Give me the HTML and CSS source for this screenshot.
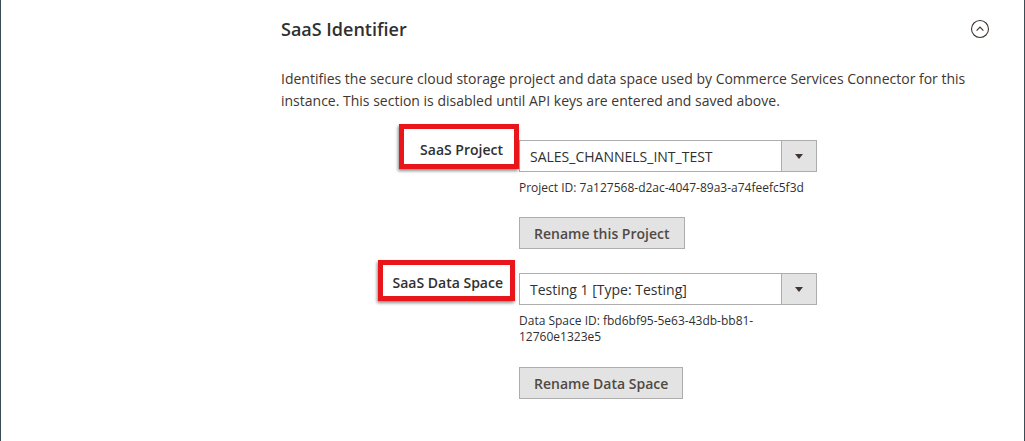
FILE: index.html
```html
<!DOCTYPE html>
<html>
<head>
<meta charset="utf-8">
<link rel="stylesheet" href="styles.css">
</head>
<body>
<div class="frame">
  <div class="section">
    <div class="section-head">
      <h2 class="title">SaaS Identifier</h2>
      <span class="toggle">
        <svg width="20" height="20" viewBox="0 0 20 20">
          <circle cx="10" cy="10" r="8.5" fill="none" stroke="#41362f" stroke-width="1.1"/>
          <path d="M6.6 11.6 L10 8.2 L13.4 11.6" fill="none" stroke="#41362f" stroke-width="1.2"/>
        </svg>
      </span>
    </div>
    <p class="desc">Identifies the secure cloud storage project and data space used by Commerce Services Connector for this instance. This section is disabled until API keys are entered and saved above.</p>

    <div class="field field-project">
      <div class="label"><span class="label-text mark mark-project">SaaS Project</span></div>
      <div class="control">
        <div class="select">
          <span class="select-value">SALES_CHANNELS_INT_TEST</span>
          <span class="select-arrow"></span>
        </div>
        <div class="note">Project ID: 7a127568-d2ac-4047-89a3-a74feefc5f3d</div>
        <button class="btn">Rename this Project</button>
      </div>
    </div>

    <div class="field field-space">
      <div class="label"><span class="label-text mark mark-space">SaaS Data Space</span></div>
      <div class="control">
        <div class="select">
          <span class="select-value">Testing 1 [Type: Testing]</span>
          <span class="select-arrow"></span>
        </div>
        <div class="note">Data Space ID: fbd6bf95-5e63-43db-bb81-12760e1323e5</div>
        <button class="btn">Rename Data Space</button>
      </div>
    </div>
  </div>
</div>
</body>
</html>
```

FILE: styles.css
```css
* { box-sizing: border-box; }
html, body { margin: 0; padding: 0; background: #fff; }
body {
  font-family: "Open Sans", "Liberation Sans", sans-serif;
  color: #303030;
  font-size: 14px;
}
.frame {
  width: 1025px;
  height: 441px;
  border-left: 1px solid #3b4c56;
  border-right: 1px solid #3b4c56;
  overflow: hidden;
}
.section {
  padding-left: 280px;
  padding-right: 34px;
}
.section-head {
  display: flex;
  justify-content: space-between;
  align-items: center;
  height: 44px;
  padding-top: 13px;
}
.title {
  margin: 0;
  font-size: 18px;
  font-weight: 600;
  color: #303030;
  line-height: 24px;
}
.toggle { display: flex; width: 20px; height: 20px; }
.desc {
  margin: 24px 0 0 0;
  width: 705px;
  line-height: 22px;
  color: #41362f;
}
.field {
  display: grid;
  grid-template-columns: 222px 298px;
  column-gap: 16px;
}
.field-project { margin-top: 28px; }
.field-space { margin-top: 24px; }
.label {
  text-align: right;
  padding-top: 0;
  font-weight: 600;
  color: #303030;
  line-height: 20px;
}
.label-text { position: relative; display: inline-block; }
.mark::before {
  content: "";
  position: absolute;
  border: 5px solid #e8151b;
  box-shadow: -1px 2px 3px rgba(0,0,0,0.45);
}
.mark-project::before { left: -21px; top: -16px; right: -16px; bottom: -9px; }
.mark-space::before { left: -14px; top: -13px; right: -12px; bottom: -8px; }
.control { display: flex; flex-direction: column; align-items: flex-start; }
.select {
  width: 298px;
  height: 32px;
  border: 1px solid #adadad;
  display: flex;
  align-items: center;
  background: #fff;
}
.select-value {
  flex: 1;
  padding-left: 10px;
  color: #303030;
  white-space: nowrap;
}
.select-arrow {
  width: 35px;
  height: 100%;
  background: #e3e3e3;
  border-left: 1px solid #adadad;
  position: relative;
}
.select-arrow::after {
  content: "";
  position: absolute;
  left: 13px;
  top: 13px;
  border-left: 4.5px solid transparent;
  border-right: 4.5px solid transparent;
  border-top: 5px solid #41362f;
}
.note {
  margin-top: 8px;
  font-size: 12px;
  line-height: 16px;
  color: #303030;
  width: 298px;
}
.btn {
  margin-top: 21px;
  height: 32px;
  padding: 0 14px;
  background: #e3e3e3;
  border: 1px solid #adadad;
  font-family: "Open Sans", "Liberation Sans", sans-serif;
  font-size: 14px;
  font-weight: 600;
  color: #514943;
  border-radius: 0;
}
.field-space .btn { margin-top: 22px; }
```
